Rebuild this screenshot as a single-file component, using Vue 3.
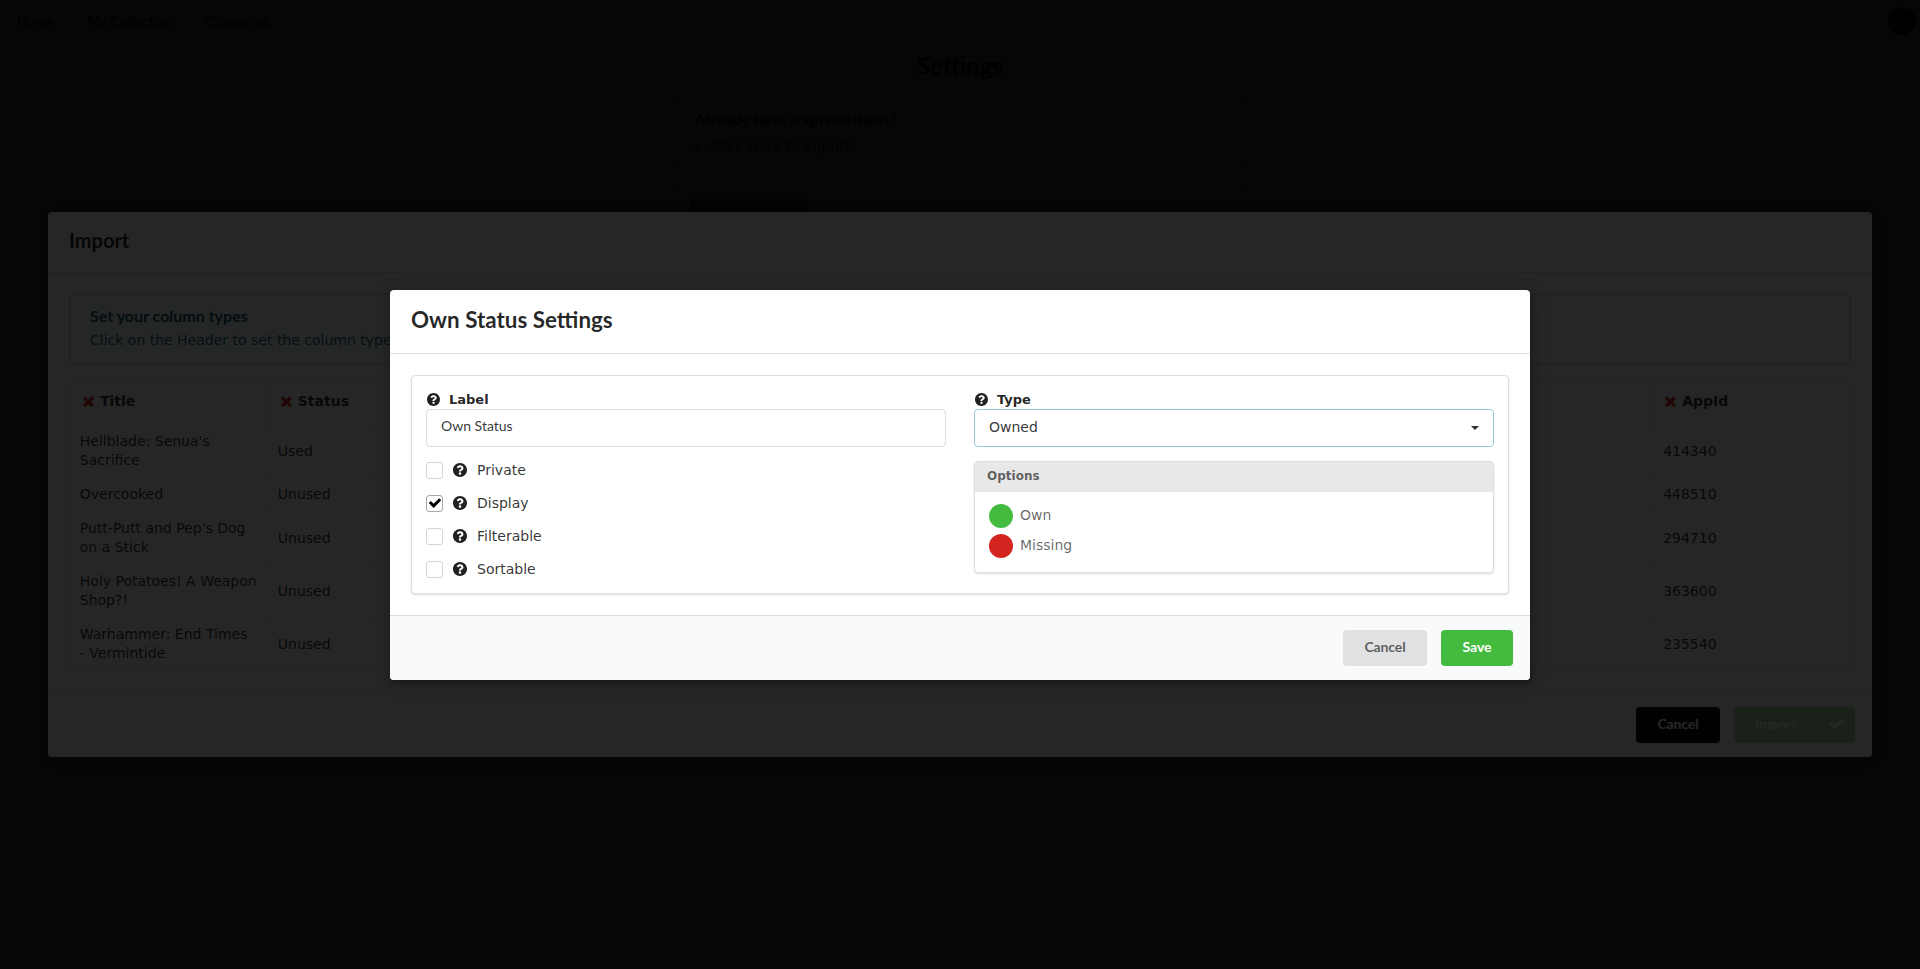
<script setup>
const columns = ['Title', 'Status', '', '', '', '', '', '', 'AppId']
const games = [
  ["Hellblade: Senua's Sacrifice", 'Used', '414340'],
  ['Overcooked', 'Unused', '448510'],
  ["Putt-Putt and Pep's Dog on a Stick", 'Unused', '294710'],
  ['Holy Potatoes! A Weapon Shop?!', 'Unused', '363600'],
  ['Warhammer: End Times\n- Vermintide', 'Unused', '235540'],
]
const toggles = [
  { name: 'Private', on: false },
  { name: 'Display', on: true },
  { name: 'Filterable', on: false },
  { name: 'Sortable', on: false },
]
const times =
  'M1490 1322q0 40-28 68l-136 136q-28 28-68 28t-68-28l-294-294-294 294q-28 28-68 28t-68-28l-136-136q-28-28-28-68t28-68l294-294-294-294q-28-28-28-68t28-68l136-136q28-28 68-28t68 28l294 294 294-294q28-28 68-28t68 28l136 136q28 28 28 68t-28 68l-294 294 294 294q28 28 28 68z'
const check =
  'M1671 566q0 40-28 68l-724 724-136 136q-28 28-68 28t-68-28l-136-136-362-362q-28-28-28-68t28-68l136-136q28-28 68-28t68 28l294 295 656-657q28-28 68-28t68 28l136 136q28 28 28 68z'
const help =
  'M504 256c0 136.997-111.043 248-248 248S8 392.997 8 256C8 119.083 119.043 8 256 8s248 111.083 248 248zM262.655 90c-54.497 0-89.255 22.957-116.549 63.758-3.536 5.286-2.353 12.415 2.715 16.258l34.699 26.31c5.205 3.947 12.621 3.008 16.665-2.122 17.864-22.658 30.113-35.797 57.303-35.797 20.429 0 45.698 13.148 45.698 32.958 0 14.976-12.363 22.667-32.534 33.976C247.128 238.528 216 254.941 216 296v4c0 6.627 5.373 12 12 12h56c6.627 0 12-5.373 12-12v-1.333c0-28.462 83.186-29.647 83.186-106.667 0-58.002-60.165-102-116.531-102zM256 338c-25.365 0-46 20.635-46 46 0 25.364 20.635 46 46 46s46-20.636 46-46c0-25.365-20.635-46-46-46z'
</script>

<template>
  <div class="page">
    <nav class="menu">
      <a class="m1">Home</a>
      <a class="m2">My Collection</a>
      <a class="m3">Changelog</a>
      <svg class="avatar" viewBox="0 0 28 28">
        <circle cx="14" cy="14" r="14" fill="#5a4a3a" />
        <path d="M2 8Q14 0 27 10L24 14Q14 6 3 12Z" fill="#10142a" />
        <path d="M4 23Q14 19 24 23Q14 32 4 23Z" fill="#10183a" />
      </svg>
    </nav>
    <h1 class="title">Settings</h1>
    <main class="content">
      <section class="ask">
        <h3>Already have a spreadsheet?</h3>
        <ul><li>Click Here to import</li></ul>
      </section>
      <section class="panel"><div class="blue"></div></section>
    </main>

    <div class="dimmer back">
      <div class="modal import">
        <header>Import</header>
        <div class="body">
          <div class="message">
            <h4>Set your column types</h4>
            <p>Click on the Header to set the column types</p>
          </div>
          <table>
            <thead>
              <tr>
                <th v-for="(c, i) in columns" :key="i">
                  <template v-if="c"><svg viewBox="302 302 1188 1252"><path :d="times" /></svg>{{ c }}</template>
                </th>
              </tr>
            </thead>
            <tbody>
              <tr v-for="g in games" :key="g[2]">
                <td>{{ g[0] }}</td>
                <td>{{ g[1] }}</td>
                <td v-for="n in 6" :key="n"></td>
                <td>{{ g[2] }}</td>
              </tr>
            </tbody>
          </table>
        </div>
        <footer>
          <button class="black">Cancel</button>
          <button class="green disabled">Import<svg viewBox="121 310 1550 1212"><path :d="check" /></svg></button>
        </footer>
      </div>
    </div>

    <div class="dimmer">
      <div class="modal settings">
        <header>Own Status Settings</header>
        <div class="body">
          <div class="segment">
            <div class="col">
              <div class="label"><svg viewBox="8 8 496 496"><path :d="help" /></svg>Label</div>
              <div class="input">Own Status</div>
              <div class="checks">
                <div v-for="t in toggles" :key="t.name" class="check">
                  <span class="box" :class="{ on: t.on }">
                    <svg v-if="t.on" viewBox="121 310 1550 1212"><path :d="check" /></svg>
                  </span>
                  <svg class="help" viewBox="8 8 496 496"><path :d="help" /></svg>{{ t.name }}
                </div>
              </div>
            </div>
            <div class="col">
              <div class="label"><svg viewBox="8 8 496 496"><path :d="help" /></svg>Type</div>
              <div class="select">Owned<i class="caret"></i></div>
              <div class="options">
                <div class="ohead">Options</div>
                <div class="opt"><i class="dot own"></i>Own</div>
                <div class="opt"><i class="dot missing"></i>Missing</div>
              </div>
            </div>
          </div>
        </div>
        <footer>
          <button class="grey">Cancel</button>
          <button class="green">Save</button>
        </footer>
      </div>
    </div>
  </div>
</template>

<style>
body { margin: 0; background: #fff; overflow: hidden; }
</style>

<style scoped>
* { box-sizing: border-box; }
.page { position: relative; height: 969px; overflow: hidden; font: 14px/19px "DejaVu Sans", Verdana, sans-serif; color: rgba(0, 0, 0, .8); }
.menu { display: flex; align-items: center; height: 42px; padding: 0 4px 0 17px; border-bottom: 1px solid #ddd; font: 14px Lato, sans-serif; color: #000; }
.m2 { margin-left: 33px; }
.m3 { margin-left: 32px; }
.avatar { width: 28px; height: 28px; margin-left: auto; }
.title { margin: 9px 0 0; text-align: center; font: 700 24px/30px Lato, sans-serif; color: #000; }
.content { width: 570px; margin: 16px auto 0; }
.ask { height: 70px; padding: 11px 19px; border: 1px solid #eee; }
.ask h3 { margin: 0; font: 700 16px/20px Lato, sans-serif; color: #000; }
.ask ul { margin: 8px 0 0; padding-left: 15px; color: #333; }
.panel { height: 100px; margin-top: 17px; padding: 14px; border: 1px solid #ddd; }
.blue { width: 119px; height: 36px; background: #007080; border-radius: 4px; }

.dimmer { position: absolute; inset: 0; display: flex; align-items: center; justify-content: center; background: rgba(0, 0, 0, .85); }
.dimmer.back { background: rgba(0, 0, 0, .84); }
.modal { display: flex; flex-direction: column; background: #fff; border-radius: 4px; overflow: hidden; box-shadow: 1px 3px 3px 0 rgba(0, 0, 0, .2), 1px 3px 15px 2px rgba(0, 0, 0, .2); }
.modal header { border-bottom: 1px solid rgba(34, 36, 38, .15); font-family: Lato, sans-serif; font-weight: 700; color: rgba(0, 0, 0, .85); padding-left: 21px; }
.modal footer { display: flex; justify-content: flex-end; border-top: 1px solid rgba(34, 36, 38, .15); background: #f9fafb; }
.modal .body { flex: 1; padding: 21px; }
button { border: 0; height: 36px; border-radius: 4px; padding: 0 0 3px; font: 700 14px Lato, sans-serif; letter-spacing: -.1px; color: #fff; }

.import { width: 1824px; height: 545px; }
.import header { height: 61px; font-size: 20px; line-height: 57px; }
.import footer { height: 65px; padding: 14px 17px 0; gap: 14px; background: #fafafa; }
.message { height: 70px; padding: 10px 20px; background: #f8ffff; border: 1px solid #a9d5de; border-radius: 4px; color: #276f86; }
.message h4 { margin: 0; font: 700 16px/21px Lato, sans-serif; color: #0e566c; }
.message p { margin: 5px 0 0; }
table { width: 1782px; margin-top: 14px; table-layout: fixed; border: 1px solid rgba(34, 36, 38, .15); border-radius: 4px; border-collapse: separate; border-spacing: 0; }
th { height: 45px; padding: 0 9px 0 13px; background: #fcfcfc; text-align: left; }
th svg { width: 11px; height: 11px; margin-right: 6px; fill: #db2828; vertical-align: -1px; }
td { padding: 7px 9.8px; border-top: 1px solid rgba(34, 36, 38, .08); white-space: pre-line; }
th + th, td + td { border-left: 1px solid rgba(34, 36, 38, .08); }
th + th { padding-left: 12px; }
td + td { padding-left: 9px; }
td:last-child { padding-left: 10px; }
.black { width: 84px; background: #0b0b0b; }
.green { background: #43bb3e; }
.disabled { display: flex; align-items: center; width: 121px; padding-left: 21px; opacity: .45; }
.disabled svg { width: 15px; height: 12px; margin-left: 32px; fill: #fff; }

.settings { width: 1140px; height: 390px; }
.settings header { height: 64px; font-size: 22.4px; line-height: 60px; }
.settings footer { height: 65px; padding: 14px 17px 0; gap: 14px; }
.segment { display: flex; gap: 28px; width: 1098px; height: 219px; padding: 14px; border: 1px solid rgba(34, 36, 38, .15); border-radius: 4px; box-shadow: 0 1px 2px rgba(34, 36, 38, .15); }
.col { width: 520px; }
.label { display: flex; align-items: center; height: 19px; font-size: 13px; font-weight: 700; padding-top: 1px; color: rgba(0, 0, 0, .87); }
.label svg { width: 13px; height: 13px; margin: 0 9px 0 1px; fill: rgba(0, 0, 0, .87); }
.input, .select { height: 38px; border: 1px solid rgba(34, 36, 38, .15); border-radius: 4px; padding: 0 14px; }
.input { font: 14px/32px Lato, sans-serif; }
.select { display: flex; align-items: center; justify-content: space-between; border-color: #96c8da; }
.caret { border: 4px solid transparent; border-top-color: #333; border-bottom: 0; }
.checks { display: grid; gap: 16px; margin-top: 15px; }
.check { display: flex; align-items: center; height: 17px; }
.box { display: flex; align-items: center; justify-content: center; width: 17px; height: 17px; border: 1px solid #d4d4d5; border-radius: 3px; }
.box.on { border-color: rgba(34, 36, 38, .4); }
.box svg { width: 12px; height: 10px; fill: #000; }
.help { width: 14px; height: 14px; margin: 0 10px 0 10px; fill: rgba(0, 0, 0, .87); }
.options { height: 112px; margin-top: 14px; border: 1px solid rgba(34, 36, 38, .15); border-radius: 4px; box-shadow: 0 1px 2px rgba(34, 36, 38, .15); color: rgba(0, 0, 0, .6); }
.ohead { height: 30px; margin-bottom: 9px; padding-left: 12px; background: #e8e8e8; font-size: 12px; font-weight: 700; line-height: 29px; }
.opt { display: flex; align-items: center; height: 30px; padding-left: 14px; }
.dot { width: 24px; height: 24px; margin-right: 7px; border-radius: 50%; }
.own { background: #43bb3e; }
.missing { background: #d42420; }
.grey { width: 84px; background: #e0e1e2; color: rgba(0, 0, 0, .6); }
.settings .green { width: 72px; }
</style>
